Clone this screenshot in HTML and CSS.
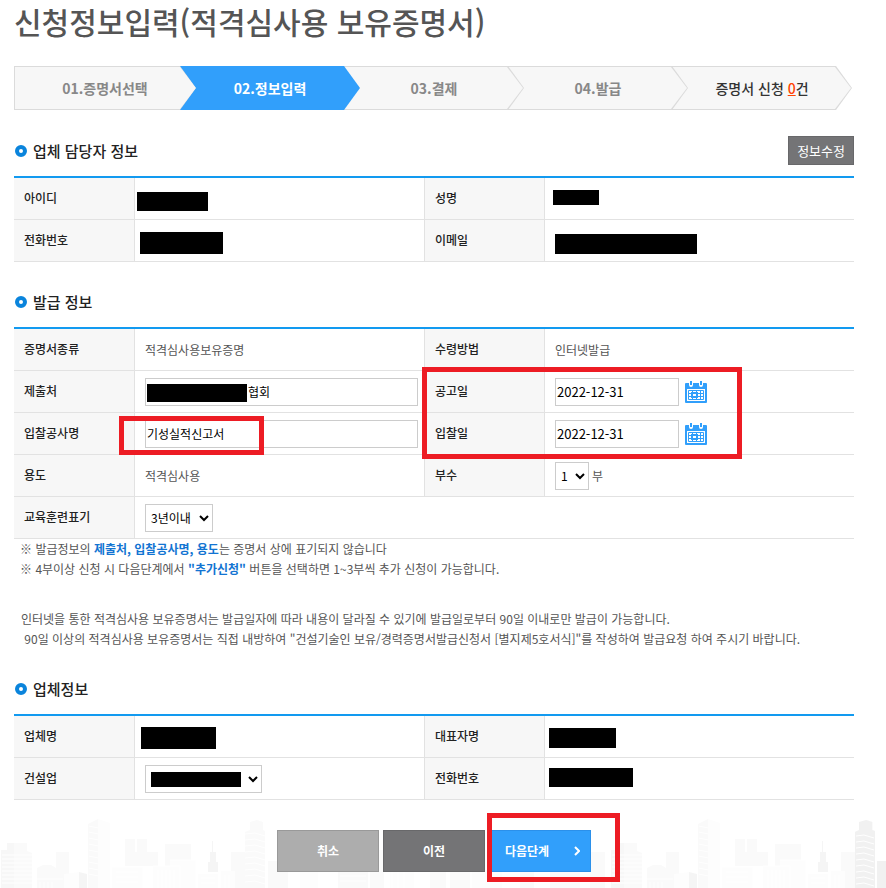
FILE: index.html
```html
<!DOCTYPE html>
<html lang="ko">
<head>
<meta charset="utf-8">
<meta name="viewport" content="width=device-width, initial-scale=1">
<title>신청정보입력</title>
<link rel="stylesheet" href="styles.css">
</head>
<body>
<svg class="defs" width="0" height="0" aria-hidden="true">
  <symbol id="calendar" viewBox="0 0 22 22">
    <path fill="#319ffb" d="M1 2h20a1 1 0 0 1 1 1v18a1 1 0 0 1-1 1H1a1 1 0 0 1-1-1V3a1 1 0 0 1 1-1z"/>
    <path fill="#fff" d="M4 0h4v4a2 2 0 0 1-4 0zM14 0h4v4a2 2 0 0 1-4 0zM2 8h18v12H2z"/>
    <path fill="#319ffb" d="M5 0h2v4H5zM15 0h2v4h-2z"/>
    <path fill="none" stroke="#319ffb" d="M3.500 9.500h15v9h-15zM3 12.500h16M3 15.500h16M7.500 9v10M11.500 9v10M15.500 9v10"/>
    <path fill="none" stroke="#319ffb" stroke-width="2" d="M7 12h5v4H7z"/>
  </symbol>
</svg>
<main class="page">
  <h1>신청정보입력(적격심사용 보유증명서)</h1>

  <ol class="steps">
    <li><span>01.증명서선택</span></li>
    <li class="current" aria-current="step"><span>02.정보입력</span></li>
    <li><span>03.결제</span></li>
    <li><span>04.발급</span></li>
    <li class="count"><span>증명서 신청 <a href="#">0</a>건</span></li>
  </ol>

  <section>
    <div class="head">
      <h2>업체 담당자 정보</h2>
      <button type="button" class="edit">정보수정</button>
    </div>
    <table>
      <colgroup><col class="label"><col><col class="label"><col class="last"></colgroup>
      <tr>
        <th scope="row">아이디</th><td><span class="mask m-id"></span></td>
        <th scope="row">성명</th><td><span class="mask m-name"></span></td>
      </tr>
      <tr>
        <th scope="row">전화번호</th><td><span class="mask m-phone"></span></td>
        <th scope="row">이메일</th><td><span class="mask m-email"></span></td>
      </tr>
    </table>
  </section>

  <section>
    <div class="head"><h2>발급 정보</h2></div>
    <table>
      <colgroup><col class="label"><col><col class="label"><col class="last"></colgroup>
      <tr>
        <th scope="row">증명서종류</th><td>적격심사용보유증명</td>
        <th scope="row">수령방법</th><td>인터넷발급</td>
      </tr>
      <tr>
        <th scope="row"><label for="dest">제출처</label></th>
        <td><input id="dest" class="wide masked" type="text" value="협회"><span class="mask m-dest"></span></td>
        <th scope="row"><label for="notice">공고일</label><span class="mark mark-dates"></span></th>
        <td><div class="field"><input id="notice" class="date" type="text" value="2022-12-31"><button type="button" class="pick" aria-label="공고일 선택"><svg width="22" height="22"><use href="#calendar"/></svg></button></div></td>
      </tr>
      <tr>
        <th scope="row"><label for="work">입찰공사명</label></th>
        <td><input id="work" class="wide" type="text" value="기성실적신고서"><span class="mark mark-work"></span></td>
        <th scope="row"><label for="bid">입찰일</label></th>
        <td><div class="field"><input id="bid" class="date" type="text" value="2022-12-31"><button type="button" class="pick" aria-label="입찰일 선택"><svg width="22" height="22"><use href="#calendar"/></svg></button></div></td>
      </tr>
      <tr>
        <th scope="row">용도</th><td>적격심사용</td>
        <th scope="row"><label for="copies">부수</label></th>
        <td><div class="field tight"><select id="copies" class="copies"><option>1</option><option>2</option><option>3</option></select>부</div></td>
      </tr>
      <tr>
        <th scope="row"><label for="edu">교육훈련표기</label></th>
        <td colspan="3"><select id="edu" class="edu"><option>3년이내</option></select></td>
      </tr>
    </table>
    <ul class="notes">
      <li>발급정보의 <strong>제출처, 입찰공사명, 용도</strong>는 증명서 상에 표기되지 않습니다</li>
      <li>4부이상 신청 시 다음단계에서 <strong>"추가신청"</strong> 버튼을 선택하면 1~3부씩 추가 신청이 가능합니다.</li>
    </ul>
    <p class="guide">인터넷을 통한 적격심사용 보유증명서는 발급일자에 따라 내용이 달라질 수 있기에 발급일로부터 90일 이내로만 발급이 가능합니다.<br>&nbsp;90일 이상의 적격심사용 보유증명서는 직접 내방하여 "건설기술인 보유/경력증명서발급신청서 [별지제5호서식]"를 작성하여 발급요청 하여 주시기 바랍니다.</p>
  </section>

  <section>
    <div class="head"><h2>업체정보</h2></div>
    <table>
      <colgroup><col class="label"><col><col class="label"><col class="last"></colgroup>
      <tr>
        <th scope="row">업체명</th><td><span class="mask m-firm"></span></td>
        <th scope="row">대표자명</th><td><span class="mask m-ceo"></span></td>
      </tr>
      <tr>
        <th scope="row"><label for="trade">건설업</label></th>
        <td><select id="trade" class="trade"><option></option></select><span class="mask m-trade"></span></td>
        <th scope="row">전화번호</th><td><span class="mask m-tel"></span></td>
      </tr>
    </table>
  </section>
</main>

<footer>
  <svg class="skyline" width="100%" height="78" aria-hidden="true">
    <defs>
      <pattern id="city" width="610" height="78" patternUnits="userSpaceOnUse">
        <g fill="#fafafa">
          <path d="M1 40h22v38H1zM7 33h7v10H7z" fill="#f7f7f7"/>
          <path d="M14 33h13v8l5 2v35H14zM56 42h13v36H56zM37 58l6-3h8l5 3v20H37z"/>
          <path d="M88 14l10-5v69H88zM125 29h10v26h-10zM137 29h10v26h-10zM125 42h33v14h-33zM165 34h26v22h-26zM231 42h15v36h-15z"/>
          <path d="M245 22l5-2V12l7-2 6 2v8l2 1v57h-20z"/>
          <path d="M268 51h20v27h-20zM338 50h30v28h-30zM370 40h14v38h-14zM430 50h16v28h-16zM450 42h20v36h-20zM520 42h14v36h-14zM550 52h30v26h-30zM590 42h15v36h-15z"/>
        </g>
        <g fill="#fdfdfd">
          <path d="M98 9l12 4v65H98zM64 64l15-2v16H64zM112 57h31v21h-31zM153 56h27v22h-27zM180 50h16v28h-16zM170 50h26v7h-26zM198 64h20v14h-20zM221 61h14v17h-14zM300 55h18v23h-18zM390 58h24v20h-24zM472 60h30v18h-30z"/>
        </g>
        <path fill="#f5f5f5" d="M208 62V52h2V42h2V31h1v11h3v10h2v10zM79 62l8 2v14h-8z"/>
        <g fill="none" stroke="#fff">
          <path d="M2 45h30M2 49h30M2 53h30M2 57h30M2 61h30M2 65h30M2 69h30M2 73h30"/>
          <path d="M89 16l9 2M89 22l9 2M89 28l9 2M89 34l9 2M89 40l9 2M89 46l9 2M89 52l9 2M89 58l9 2M89 64l9 2"/>
          <path d="M245 24l10-1 10 3M245 30l10-1 10 3M245 36l10-1 10 3M245 42l10-1 10 3M245 48l10-1 10 3M245 54l10-1 10 3M245 60l10-1 10 3M245 66l10-1 10 3M245 72l10-1 10 3"/>
          <path d="M116 62h22M116 67h22M116 72h22M158 60v18M162 60v18M166 60v18M170 60v18M174 60v18M201 68h14M201 73h14M225 65v13M229 65v13M33 69h30M36 72v6M40 72v6M44 72v6M48 72v6M52 72v6M112 57h31v21M153 56h27v22M170 50h26v28M340 66h26M340 71h26M392 62v16M398 62v16M404 62v16"/>
        </g>
      </pattern>
    </defs>
    <rect width="100%" height="78" fill="url(#city)"/>
    <svg x="100%" width="32" height="78" overflow="visible">
      <path fill="#f1f1f1" d="M-31 22l4-2v-8l7-2 6 2v8l3 1v57h-20zM-9 51h9v27h-9z"/>
      <path fill="none" stroke="#fff" d="M-30 26l8-1 10 3M-30 32l8-1 10 3M-30 38l8-1 10 3M-30 44l8-1 10 3M-30 50l8-1 10 3M-30 56l8-1 10 3M-30 62l8-1 10 3M-30 68l8-1 10 3M-30 74l8-1 10 3"/>
    </svg>
  </svg>
  <div class="actions">
    <button type="button" class="cancel">취소</button>
    <button type="button" class="prev">이전</button>
    <div class="next-wrap">
      <button type="submit" class="next">다음단계 <svg width="6" height="10" viewBox="0 0 6 10"><path d="M1 1l4 4-4 4" fill="none" stroke="#fff" stroke-width="2"/></svg></button>
      <span class="mark mark-next"></span>
    </div>
  </div>
</footer>
</body>
</html>
```
FILE: styles.css
```css
*, ::before, ::after { box-sizing: border-box; }

body {
  margin: 0;
  background: #fff;
  color: #555;
  font: 12px/20px "Noto Sans CJK KR", sans-serif;
}

button, input, select { font: inherit; }
button { cursor: pointer; }

.defs { position: absolute; }

.page { padding: 0 32px 0 14px; }

h1 {
  margin: 0 0 24px;
  color: #555;
  font-size: 30px;
  font-weight: 500;
  line-height: 42px;
}

/* Progress steps */
.steps {
  display: flex;
  margin: 0 2px 26px 0;
  padding: 0;
  list-style: none;
}
.steps li {
  --arrow: polygon(0 0, calc(100% - 16px) 0, 100% 50%, calc(100% - 16px) 100%, 0 100%);
  position: relative;
  z-index: 1;
  flex: 1;
  height: 44px;
  margin-right: -16px;
  background: #dbdbdb;
  clip-path: var(--arrow);
  color: #888;
  font-size: 14px;
  font-weight: 700;
  line-height: 44px;
  text-align: center;
}
.steps li::before {
  content: "";
  position: absolute;
  inset: 1px 1px 1px 0;
  background: #f7f7f7;
  clip-path: var(--arrow);
}
.steps li:first-child { z-index: 5; flex-basis: 2px; }
.steps li:first-child::before { inset: 1px 0 1px 1px; }
.steps li:nth-child(2) { z-index: 4; }
.steps li:nth-child(3) { z-index: 3; }
.steps li:nth-child(4) { z-index: 2; }
.steps li:last-child { margin-right: 0; }
.steps span { position: relative; }
.steps .current, .steps .current::before { background: #319ffb; }
.steps .current { color: #fff; }
.steps .count { color: #333; font-weight: 500; }
.steps a { color: #ff4200; }

/* Section headings */
.head {
  display: flex;
  align-items: center;
  justify-content: space-between;
  height: 29px;
  margin-bottom: 11px;
}
section + section .head { margin-top: 25px; }
h2 {
  display: flex;
  align-items: center;
  gap: 6px;
  margin: 0;
  color: #222;
  font-size: 15px;
  font-weight: 500;
}
h2::before {
  content: "";
  width: 12px;
  height: 12px;
  margin-left: 1px;
  border: 4px solid #0a84dc;
  border-radius: 50%;
}
.edit {
  height: 29px;
  padding: 0 8px;
  border: 1px solid #68686a;
  background: #747476;
  color: #fff;
  font-size: 13px;
}

/* Data tables */
table {
  width: 100%;
  border-top: 2px solid #129af0;
  border-spacing: 0;
  table-layout: fixed;
}
.label { width: 120px; }
.last { width: 310px; }
th, td {
  position: relative;
  height: 42px;
  padding: 0 0 0 10px;
  border-bottom: 1px solid #e2e2e2;
}
td { border-left: 1px solid #e2e2e2; }
th {
  padding-bottom: 2px;
  background: #f7f7f7;
  color: #222;
  font-weight: 500;
  text-align: left;
}
td + th { border-left: 1px solid #e2e2e2; }

/* Form controls */
input, select {
  display: block;
  height: 28px;
  border: 1px solid #ccc;
  border-radius: 0;
  background: #fff;
  color: #000;
}
input { padding: 0 1px; }
select { padding: 0 1px; }
.wide { width: calc(100% - 6px); }
.masked { padding-left: 102px; }
.date { width: 124px; font-size: 13px; }
.edu { width: 68px; }
.copies { width: 34px; }
.trade { width: 117px; }
.field {
  display: flex;
  align-items: center;
  gap: 6px;
}
.tight { gap: 3px; }
.pick {
  width: 22px;
  height: 22px;
  padding: 0;
  border: 0;
  background: none;
}
.pick svg { display: block; }

/* Blacked-out values */
.mask { position: absolute; background: #000; }
.m-id { left: 2px; top: 14px; width: 71px; height: 19px; }
.m-name { left: 8px; top: 12px; width: 46px; height: 15px; }
.m-phone { left: 5px; top: 12px; width: 83px; height: 22px; }
.m-email { left: 10px; top: 14px; width: 142px; height: 20px; }
.m-dest { left: 12px; top: 13px; width: 100px; height: 18px; }
.m-firm { left: 6px; top: 11px; width: 75px; height: 22px; }
.m-ceo { left: 4px; top: 12px; width: 67px; height: 20px; }
.m-trade { left: 16px; top: 14px; width: 90px; height: 15px; }
.m-tel { left: 4px; top: 10px; width: 84px; height: 19px; }

/* Highlight frames */
.mark {
  position: absolute;
  z-index: 6;
  border: 5px solid #ed1c24;
  pointer-events: none;
}
.mark-work { left: -16px; top: 3px; width: 145px; height: 39px; }
.mark-dates { left: -3px; top: -4px; width: 320px; height: 92px; }
.mark-next { left: -2px; top: -17px; width: 133px; height: 69px; }

/* Notes */
.notes { margin: 0 0 30px; padding: 0 0 0 6px; list-style: none; }
.notes li::before { content: "※ "; }
.notes strong { color: #1274d2; }
.guide { margin: 0; padding-left: 7px; }

/* Bottom actions */
footer { position: relative; padding: 30px 32px 16px 14px; }
.skyline {
  position: absolute;
  bottom: 0;
  left: 0;
}
.actions {
  position: relative;
  display: flex;
  justify-content: center;
  gap: 4px;
}
.actions button {
  width: 102px;
  height: 42px;
  padding: 0;
  border: 1px solid #999;
  background: #adadad;
  color: #fff;
  font-weight: 700;
}
.actions .prev { border-color: #68686a; background: #747476; }
.next-wrap { position: relative; }
.actions .next {
  display: flex;
  align-items: center;
  justify-content: space-between;
  padding: 0 10px 0 15px;
  border-color: #2b90ea;
  background: #319ffb;
}
```
